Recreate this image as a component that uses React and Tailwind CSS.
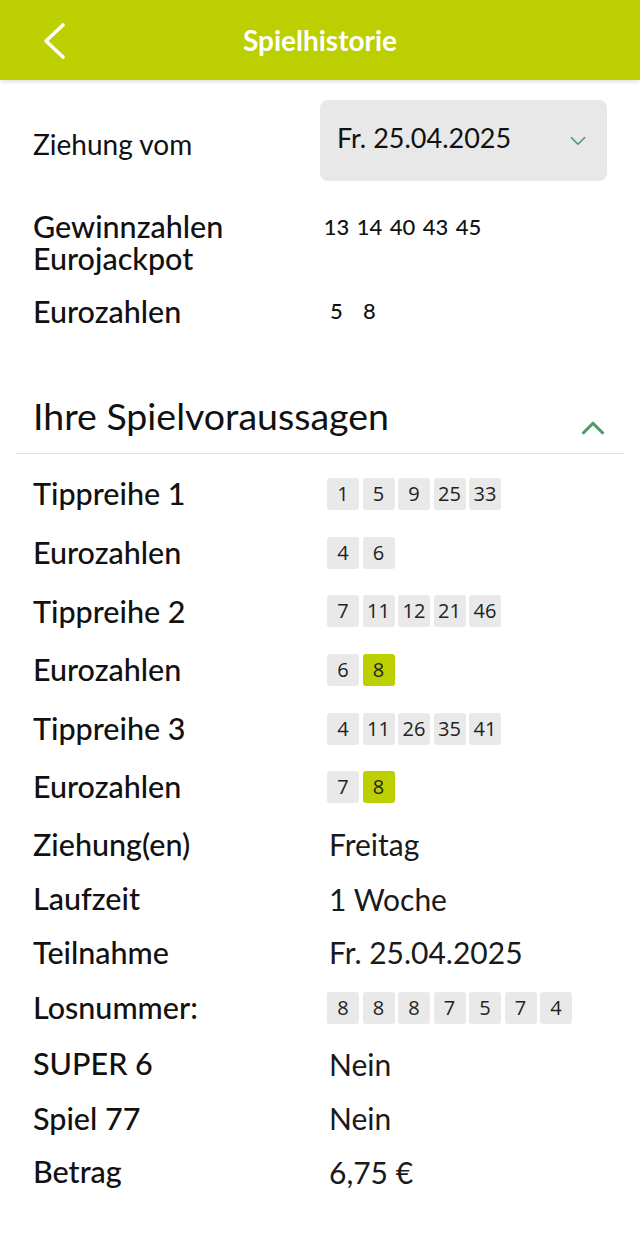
import { ChevronDown, ChevronUp } from 'lucide-react';

const label = "font-['Lato','Noto_Sans',sans-serif]";
const chipFont = "font-['Open_Sans','Noto_Sans',sans-serif]";

const tipRows = [
  { name: 'Tippreihe 1', nums: [1, 5, 9, 25, 33] },
  { name: 'Eurozahlen', nums: [4, 6] },
  { name: 'Tippreihe 2', nums: [7, 11, 12, 21, 46] },
  { name: 'Eurozahlen', nums: [6, 8], hit: [8] },
  { name: 'Tippreihe 3', nums: [4, 11, 26, 35, 41] },
  { name: 'Eurozahlen', nums: [7, 8], hit: [8] },
];

function Chips({ nums, hit = [] }) {
  return (
    <div className="flex gap-[3.5px] ml-[7px]">
      {nums.map((n, i) => (
        <span
          key={i}
          className={`w-8 h-8 rounded-[3px] flex items-center justify-center text-[20px] text-[#222] ${chipFont} ${hit.includes(n) ? 'bg-[#bccf00]' : 'bg-[#e9e9e9]'}`}
        >
          {n}
        </span>
      ))}
    </div>
  );
}

function Row({ name, h, children }) {
  return (
    <div className="flex items-center px-[33px]" style={{ height: h }}>
      <div className={`w-[287px] shrink-0 text-[30.5px] font-medium text-[#111] ${label}`}>{name}</div>
      {children}
    </div>
  );
}

function Value({ children }) {
  return <span className={`ml-[9px] text-[30px] text-[#1a1a1a] ${label}`}>{children}</span>;
}

export default function App() {
  return (
    <div className={`w-[640px] min-h-[1243px] bg-white ${label}`}>
      {/* header */}
      <div className="h-20 bg-[#bccf00] flex items-center relative shadow-[0_2px_4px_rgba(0,0,0,0.12)]">
        <svg className="absolute left-[40px] top-[22px]" width="28" height="38" viewBox="0 0 28 38" fill="none">
          <path d="M23 3 L6 19 L23 35" stroke="white" strokeWidth="3.6" strokeLinecap="round" strokeLinejoin="round" />
        </svg>
        <h1 className="w-full text-center text-white text-[28px] font-bold">Spielhistorie</h1>
      </div>

      {/* Ziehung vom */}
      <div className="flex items-center px-[33px] mt-5">
        <div className="w-[287px] shrink-0 text-[28px] text-[#111] pt-1.5">Ziehung vom</div>
        <div className="flex-1 h-[81px] bg-[#e8e8e8] rounded-lg flex items-center justify-between pl-[17px] pr-[16px] pb-1">
          <span className="text-[27px] text-[#111]">Fr. 25.04.2025</span>
          <ChevronDown size={26} strokeWidth={1.6} className="text-[#4f9a6e] mt-1" />
        </div>
      </div>

      {/* Gewinnzahlen */}
      <div className="flex items-start px-[33px] mt-[30px]">
        <div className="w-[287px] shrink-0 text-[30.5px] font-medium leading-[31.5px] text-[#111]">
          <div>Gewinnzahlen</div>
          <div>Eurojackpot</div>
        </div>
        <div className="flex text-[22px] font-medium leading-[32px] text-[#111]">
          {[13, 14, 40, 43, 45].map(n => (
            <span key={n} className="w-[33px] text-center">{n}</span>
          ))}
        </div>
      </div>
      <div className="flex items-center px-[33px] mt-[20px]">
        <div className="w-[287px] shrink-0 text-[30.5px] font-medium leading-[32px] text-[#111]">Eurozahlen</div>
        <div className="flex text-[22px] font-medium text-[#111]">
          {[5, 8].map(n => (
            <span key={n} className="w-[33px] text-center">{n}</span>
          ))}
        </div>
      </div>

      {/* Ihre Spielvoraussagen */}
      <div className="mx-4 mt-[69px] border-b border-[#e2e2e2] flex items-end justify-between pl-[17px] pr-[12px] pb-[17px]">
        <h2 className="text-[37.5px] leading-[40px] text-[#111]">Ihre Spielvoraussagen</h2>
        <ChevronUp size={38} strokeWidth={2} className="text-[#4f9a6e] mb-[-11px]" />
      </div>

      <div className="pt-[11px]">
        {tipRows.map((r, i) => (
          <Row key={i} name={r.name} h={58.6}>
            <Chips nums={r.nums} hit={r.hit} />
          </Row>
        ))}
        <Row name="Ziehung(en)" h={56}><Value>Freitag</Value></Row>
        <Row name="Laufzeit" h={53}><Value>1 Woche</Value></Row>
        <Row name="Teilnahme" h={54}><Value>Fr. 25.04.2025</Value></Row>
        <Row name="Losnummer:" h={56.5}>
          <Chips nums={[8, 8, 8, 7, 5, 7, 4]} />
        </Row>
        <Row name="SUPER 6" h={56}><Value>Nein</Value></Row>
        <Row name="Spiel 77" h={53.5}><Value>Nein</Value></Row>
        <Row name="Betrag" h={53}><Value>6,75 €</Value></Row>
      </div>
    </div>
  );
}
